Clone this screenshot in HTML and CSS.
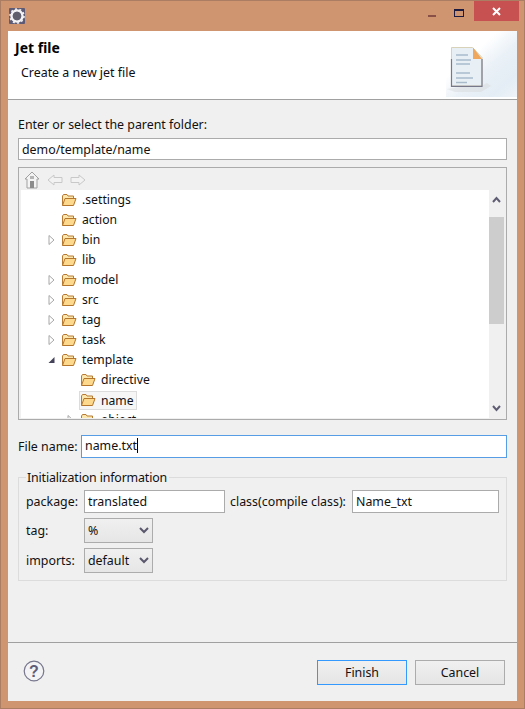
FILE: index.html
```html
<!DOCTYPE html>
<html lang="en">
<head>
<meta charset="utf-8">
<title>Jet file</title>
<link rel="stylesheet" href="styles.css">
</head>
<body>
<svg width="0" height="0" class="defs">
  <defs>
    <symbol id="folder" viewBox="0 0 16 16">
      <path d="M1.500 13.500V4l1-1.500h3.500l1 1.500h5.500v2.500" fill="#fbe6ae" stroke="#b67a33"/>
      <path d="M1.500 13.500 4 6.500h11l-2.500 7z" fill="#fcd98c" stroke="#b4752c" stroke-linejoin="round"/>
    </symbol>
    <symbol id="closed" viewBox="0 0 7 10">
      <path d="M1 .5 6 5 1 9.500z" fill="#fff" stroke="#a6a6a6"/>
    </symbol>
  </defs>
</svg>
<div class="window">
  <div class="titlebar">
    <svg class="app-icon" width="16" height="16" viewBox="0 0 16 16">
      <rect width="16" height="16" rx="1" fill="#5c5a74"/>
      <circle cx="8" cy="8" r="5.500" fill="none" stroke="#f3f3f5" stroke-width="2.400"/>
      <circle cx="8" cy="8" r="7" fill="none" stroke="#f3f3f5" stroke-width="1.600" stroke-dasharray="2 2.400"/>
      <circle cx="8" cy="8" r="4.200" fill="#5f5f6e"/>
    </svg>
    <div class="controls">
      <div class="ctl"><span class="min"></span></div>
      <div class="ctl"><span class="max"></span></div>
      <div class="close">
        <svg width="9" height="9" viewBox="0 0 9 9"><path d="M1 1l7 7M8 1 1 8" stroke="#fff" stroke-width="2"/></svg>
      </div>
    </div>
  </div>
  <div class="client">
    <header class="banner">
      <div class="banner-text">
        <h1>Jet file</h1>
        <p>Create a new jet file</p>
      </div>
      <div class="banner-art">
        <svg width="46" height="46" viewBox="0 0 46 46">
          <path d="M0 42 12 40h20l8-4 4 3-10 6H8z" fill="#d4d6da" opacity=".45"/>
          <path d="M4.500.5h21l9.500 10V39H4.500z" fill="#e9f0f5" stroke="#d8d2b8"/>
          <path d="M4.500 12v27.300H35V12" fill="none" stroke="#77798a" stroke-width="1.200"/>
          <path d="M26 .5l9 11.500h-9z" fill="#f0a75b"/>
          <path d="M9 8h12M9 13h15M9 17h14M9 26h14M9 31h17M9 35.500h11" stroke="#a9bacb" stroke-width="1.300"/>
        </svg>
      </div>
    </header>
    <main class="body">
      <label class="parent-label">Enter or select the parent folder:</label>
      <div class="input path-input">demo/template/name</div>
      <div class="tree-box">
        <div class="tree-toolbar">
          <svg width="16" height="18" viewBox="0 0 16 18"><path d="M8 1 1 8h2v9h10V8h2z" fill="#f4f4f4" stroke="#a0a0a0"/><rect x="6" y="10" width="4" height="7" fill="#8c8c8c"/><rect x="6" y="5" width="4" height="3" fill="#b5b5b5"/></svg>
          <svg width="16" height="12" viewBox="0 0 16 12"><path d="M7 1 1 6l6 5V8.500h8v-5H7z" fill="#f2f2f2" stroke="#c8c8c8"/></svg>
          <svg width="16" height="12" viewBox="0 0 16 12"><path d="M9 1l6 5-6 5V8.500H1v-5h8z" fill="#f2f2f2" stroke="#c8c8c8"/></svg>
        </div>
        <div class="tree-main">
          <ul class="tree">
            <li class="row"><span class="tw"></span><svg class="fld"><use href="#folder"/></svg>.settings</li>
            <li class="row"><span class="tw"></span><svg class="fld"><use href="#folder"/></svg>action</li>
            <li class="row"><span class="tw"><svg class="arrow"><use href="#closed"/></svg></span><svg class="fld"><use href="#folder"/></svg>bin</li>
            <li class="row"><span class="tw"></span><svg class="fld"><use href="#folder"/></svg>lib</li>
            <li class="row"><span class="tw"><svg class="arrow"><use href="#closed"/></svg></span><svg class="fld"><use href="#folder"/></svg>model</li>
            <li class="row"><span class="tw"><svg class="arrow"><use href="#closed"/></svg></span><svg class="fld"><use href="#folder"/></svg>src</li>
            <li class="row"><span class="tw"><svg class="arrow"><use href="#closed"/></svg></span><svg class="fld"><use href="#folder"/></svg>tag</li>
            <li class="row"><span class="tw"><svg class="arrow"><use href="#closed"/></svg></span><svg class="fld"><use href="#folder"/></svg>task</li>
            <li class="row"><span class="tw"><svg class="arrow" viewBox="0 0 7 10"><path d="M6.500 2v6h-6z" fill="#45435a"/></svg></span><svg class="fld"><use href="#folder"/></svg>template</li>
            <li class="row child"><span class="tw"></span><svg class="fld"><use href="#folder"/></svg>directive</li>
            <li class="row child"><span class="tw"></span><span class="selected"><svg class="fld"><use href="#folder"/></svg>name</span></li>
            <li class="row child"><span class="tw"><svg class="arrow"><use href="#closed"/></svg></span><svg class="fld"><use href="#folder"/></svg>object</li>
          </ul>
          <div class="scrollbar">
            <svg width="15" height="18" viewBox="0 0 15 18"><path d="M4 12l3.500-4 3.500 4" fill="none" stroke="#5f5d74" stroke-width="2"/></svg>
            <div class="track"><div class="thumb"></div></div>
            <svg width="15" height="18" viewBox="0 0 15 18"><path d="M4 6l3.500 4 3.500-4" fill="none" stroke="#5f5d74" stroke-width="2"/></svg>
          </div>
        </div>
      </div>
      <div class="file-row">
        <label>File name:</label>
        <div class="input file-input">name.txt<span class="caret"></span></div>
      </div>
      <section class="group">
        <span class="legend">Initialization information</span>
        <div class="grow">
          <label class="lab">package:</label>
          <div class="input pkg">translated</div>
          <label class="lab2">class(compile class):</label>
          <div class="input cls">Name_txt</div>
        </div>
        <div class="grow sel-row">
          <label class="lab">tag:</label>
          <div class="select">%<svg width="10" height="7" viewBox="0 0 10 7"><path d="M1 1l4 4 4-4" fill="none" stroke="#5a586c" stroke-width="2"/></svg></div>
        </div>
        <div class="grow sel-row">
          <label class="lab">imports:</label>
          <div class="select">default<svg width="10" height="7" viewBox="0 0 10 7"><path d="M1 1l4 4 4-4" fill="none" stroke="#5a586c" stroke-width="2"/></svg></div>
        </div>
      </section>
    </main>
    <footer class="footer">
      <svg class="help" width="22" height="22" viewBox="0 0 22 22">
        <circle cx="11" cy="11" r="9.800" fill="#f3f3f5" stroke="#75758c" stroke-width="1.200"/>
        <text x="11" y="16.500" class="help-q">?</text>
      </svg>
      <div class="buttons">
        <button class="btn default">Finish</button>
        <button class="btn">Cancel</button>
      </div>
    </footer>
  </div>
</div>
</body>
</html>
```
FILE: styles.css
```css
* { box-sizing: border-box; }
html, body { margin: 0; padding: 0; }
body {
  width: 525px;
  height: 709px;
  overflow: hidden;
  font-family: "Noto Sans", "Open Sans", sans-serif;
  font-size: 12.4px;
  color: #111;
}
.defs { display: block; position: absolute; }
.window {
  width: 525px;
  height: 709px;
  background: #cf9470;
  border: 1px solid #ab7e63;
  padding: 0 7px 7px;
  display: flex;
  flex-direction: column;
}
.titlebar {
  height: 30px;
  flex: none;
  display: flex;
  align-items: flex-start;
  justify-content: space-between;
  padding-top: 6px;
  margin-left: 1px;
  margin-right: -1px;
}
.app-icon { display: block; margin-top: 1px; }
.controls { display: flex; margin-top: -6px; align-items: flex-start; }
.ctl { width: 27px; height: 20px; display: flex; align-items: center; justify-content: center; margin-top: 1px; }
.min { display: block; width: 8px; height: 2px; background: #8a5048; margin-top: 7px; }
.max { display: block; width: 10px; height: 8px; border: 1px solid #1c1a3e; border-top-width: 2px; margin-top: 1px; }
.close { width: 45px; height: 20px; background: #c75050; margin-top: 0; margin-left: 2px; margin-right: -1px; display: flex; align-items: center; justify-content: center; }
.client {
  flex: 1;
  min-height: 0;
  background: #f0f0f0;
  display: flex;
  flex-direction: column;
  width: 509px;
}
.banner {
  height: 69px;
  flex: none;
  background: #fff;
  border-bottom: 1px solid #a0a0a0;
  display: flex;
  justify-content: space-between;
}
.banner-text { padding: 7px 0 0 7px; }
.banner h1 { margin: 0; font-size: 14px; font-weight: 700; line-height: 20px; color: #000; }
.banner p { margin: 6px 0 0 6px; line-height: 18px; color: #0e0e14; }
.banner-art {
  width: 71px;
  height: 66px;
  background: linear-gradient(138deg, #fff 36%, #eaf1f7 58%, #e4edf5 82%, #eef3f8 100%);
  padding: 16px 0 0 1px;
}
.banner-art svg { display: block; }
.body { padding: 16px 10px 0; flex: 1; min-height: 0; }
.parent-label { display: block; line-height: 18px; margin-bottom: 4px; }
.input {
  background: #fff;
  border: 1px solid #ababab;
  line-height: 20px;
  height: 22px;
  padding: 1px 3px 0;
  white-space: nowrap;
  flex: none;
}
.path-input { width: 489px; }
.tree-box {
  margin-top: 7px;
  width: 489px;
  height: 253px;
  border: 1px solid #ababab;
  background: #f0f0f0;
  padding: 2px;
  display: flex;
  flex-direction: column;
  overflow: hidden;
}
.tree-toolbar {
  height: 20px;
  flex: none;
  display: flex;
  align-items: center;
  gap: 7px;
  padding-left: 3px;
}
.tree-main { display: flex; height: 228px; }
.tree {
  list-style: none;
  margin: 0;
  padding: 0;
  flex: 1;
  background: #fff;
  overflow: hidden;
  font-size: 12.2px;
}
.row {
  height: 20px;
  display: flex;
  align-items: center;
  padding-left: 27px;
  white-space: nowrap;
  line-height: 20px;
}
.row.child { padding-left: 46px; }
.tw { width: 13px; flex: none; display: flex; align-items: center; }
.arrow { width: 7px; height: 10px; display: block; }
.fld { width: 16px; height: 16px; margin-right: 5px; flex: none; }
.selected {
  display: flex;
  align-items: center;
  height: 19px;
  margin-left: -1px;
  padding: 0 2px 0 0;
  background: #f6f6f6;
  border: 1px solid #dcdcdc;
  line-height: 17px;
}
.scrollbar { width: 15px; flex: none; display: flex; flex-direction: column; }
.scrollbar svg { display: block; flex: none; }
.track { flex: 1; padding-top: 9px; }
.thumb { height: 107px; background: #cdcdcd; }
.file-row { display: flex; align-items: center; margin-top: 15px; }
.file-row label { width: 63px; flex: none; }
.file-input { width: 426px; height: 23px; border: 1px solid #569de5; line-height: 20px; padding: 0 3px; }
.caret { display: inline-block; width: 1px; height: 15px; background: #000; vertical-align: -3px; }
.group {
  position: relative;
  width: 489px;
  height: 104px;
  margin-top: 19px;
  border: 1px solid #dcdcdc;
  padding: 12px 7px 0;
}
.legend {
  position: absolute;
  left: 7px;
  top: -9px;
  padding: 0 2px 0 1px;
  background: #f0f0f0;
  line-height: 17px;
  letter-spacing: -0.15px;
}
.grow { display: flex; align-items: center; height: 23px; }
.sel-row { height: 25px; margin-top: 5px; }
.lab { width: 58px; flex: none; }
.lab2 { margin: 0 0 0 5px; width: 122px; flex: none; white-space: nowrap; }
.pkg { width: 141px; height: 23px; }
.cls { width: 147px; height: 23px; }
.select {
  width: 69px;
  height: 25px;
  border: 1px solid #acacac;
  background: linear-gradient(#f0f0f0, #e6e6e6);
  display: flex;
  align-items: center;
  justify-content: space-between;
  padding: 0 3px;
  line-height: 20px;
}
.footer {
  height: 59px;
  flex: none;
  border-top: 1px solid #a0a0a0;
  display: flex;
  justify-content: space-between;
  padding: 17px 12px 0 15px;
}
.help { display: block; }
.help-q { font-family: "Liberation Sans", sans-serif; font-size: 16px; font-weight: 700; fill: #5d5d78; text-anchor: middle; }
.buttons { display: flex; gap: 8px; }
.btn {
  width: 90px;
  height: 25px;
  font: inherit;
  color: #111;
  background: linear-gradient(#f0f0f0, #e5e5e5);
  border: 1px solid #acacac;
  padding: 0;
}
.btn.default { border-color: #3399ff; }
```
